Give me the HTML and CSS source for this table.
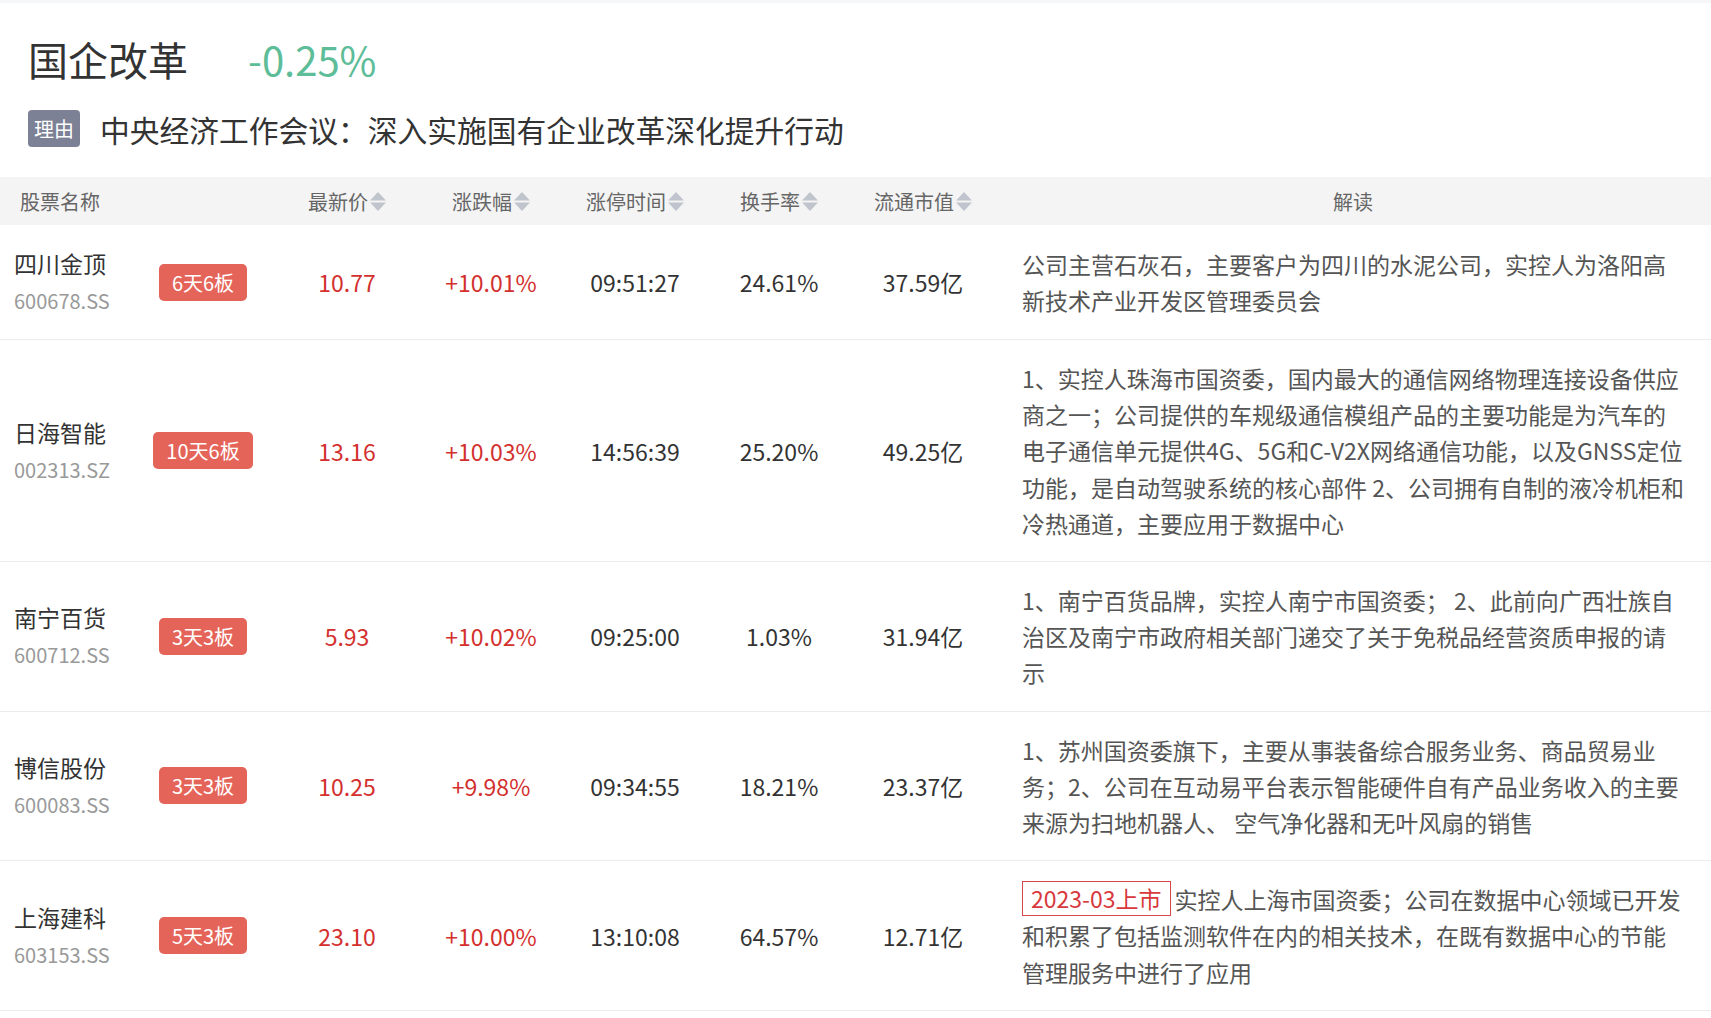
FILE: index.html
```html
<!DOCTYPE html>
<html lang="zh-CN">
<head>
<meta charset="utf-8">
<title>国企改革</title>
<link rel="stylesheet" href="styles.css">
</head>
<body>
<div class="top">
  <div class="title-row">
    <h1 class="title">国企改革</h1>
    <span class="change">-0.25%</span>
  </div>
  <div class="reason">
    <span class="reason-tag">理由</span>
    <span class="reason-text">中央经济工作会议：深入实施国有企业改革深化提升行动</span>
  </div>
</div>

<div class="table">
  <div class="thead">
    <div class="th th-name">股票名称</div>
    <div class="th"></div>
    <div class="th sort">最新价<svg class="arrows" viewBox="0 0 16 19" width="16" height="19"><polygon points="0,8.5 8,0 16,8.5"/><polygon points="0,10.5 16,10.5 8,19"/></svg></div>
    <div class="th sort">涨跌幅<svg class="arrows" viewBox="0 0 16 19" width="16" height="19"><polygon points="0,8.5 8,0 16,8.5"/><polygon points="0,10.5 16,10.5 8,19"/></svg></div>
    <div class="th sort">涨停时间<svg class="arrows" viewBox="0 0 16 19" width="16" height="19"><polygon points="0,8.5 8,0 16,8.5"/><polygon points="0,10.5 16,10.5 8,19"/></svg></div>
    <div class="th sort">换手率<svg class="arrows" viewBox="0 0 16 19" width="16" height="19"><polygon points="0,8.5 8,0 16,8.5"/><polygon points="0,10.5 16,10.5 8,19"/></svg></div>
    <div class="th sort">流通市值<svg class="arrows" viewBox="0 0 16 19" width="16" height="19"><polygon points="0,8.5 8,0 16,8.5"/><polygon points="0,10.5 16,10.5 8,19"/></svg></div>
    <div class="th th-desc">解读</div>
  </div>

  <div class="row">
    <div class="name-cell"><div class="name">四川金顶</div><div class="code">600678.SS</div></div>
    <div class="badge-cell"><span class="badge">6天6板</span></div>
    <div class="num up">10.77</div>
    <div class="num up">+10.01%</div>
    <div class="num">09:51:27</div>
    <div class="num">24.61%</div>
    <div class="num">37.59亿</div>
    <div class="desc">公司主营石灰石，主要客户为四川的水泥公司，实控人为洛阳高新技术产业开发区管理委员会</div>
  </div>

  <div class="row">
    <div class="name-cell"><div class="name">日海智能</div><div class="code">002313.SZ</div></div>
    <div class="badge-cell"><span class="badge">10天6板</span></div>
    <div class="num up">13.16</div>
    <div class="num up">+10.03%</div>
    <div class="num">14:56:39</div>
    <div class="num">25.20%</div>
    <div class="num">49.25亿</div>
    <div class="desc">1、实控人珠海市国资委，国内最大的通信网络物理连接设备供应商之一；公司提供的车规级通信模组产品的主要功能是为汽车的电子通信单元提供4G、5G和C-V2X网络通信功能，以及GNSS定位功能，是自动驾驶系统的核心部件 2、公司拥有自制的液冷机柜和冷热通道，主要应用于数据中心</div>
  </div>

  <div class="row">
    <div class="name-cell"><div class="name">南宁百货</div><div class="code">600712.SS</div></div>
    <div class="badge-cell"><span class="badge">3天3板</span></div>
    <div class="num up">5.93</div>
    <div class="num up">+10.02%</div>
    <div class="num">09:25:00</div>
    <div class="num">1.03%</div>
    <div class="num">31.94亿</div>
    <div class="desc">1、南宁百货品牌，实控人南宁市国资委； 2、此前向广西壮族自治区及南宁市政府相关部门递交了关于免税品经营资质申报的请示</div>
  </div>

  <div class="row">
    <div class="name-cell"><div class="name">博信股份</div><div class="code">600083.SS</div></div>
    <div class="badge-cell"><span class="badge">3天3板</span></div>
    <div class="num up">10.25</div>
    <div class="num up">+9.98%</div>
    <div class="num">09:34:55</div>
    <div class="num">18.21%</div>
    <div class="num">23.37亿</div>
    <div class="desc">1、苏州国资委旗下，主要从事装备综合服务业务、商品贸易业务；2、公司在互动易平台表示智能硬件自有产品业务收入的主要来源为扫地机器人、 空气净化器和无叶风扇的销售</div>
  </div>

  <div class="row">
    <div class="name-cell"><div class="name">上海建科</div><div class="code">603153.SS</div></div>
    <div class="badge-cell"><span class="badge">5天3板</span></div>
    <div class="num up">23.10</div>
    <div class="num up">+10.00%</div>
    <div class="num">13:10:08</div>
    <div class="num">64.57%</div>
    <div class="num">12.71亿</div>
    <div class="desc"><span class="ipo">2023-03上市</span>实控人上海市国资委；公司在数据中心领域已开发和积累了包括监测软件在内的相关技术，在既有数据中心的节能管理服务中进行了应用</div>
  </div>
</div>
</body>
</html>
```

FILE: styles.css
```css
* {
  box-sizing: border-box;
}

body {
  margin: 0;
  background: #ffffff;
  font-family: "Noto Sans CJK SC", "Noto Sans", sans-serif;
  color: #333333;
  border-top: 3px solid #f5f6f8;
}

.top {
  padding: 30px 0 0 28px;
}

.title-row {
  display: flex;
  align-items: center;
  height: 52px;
}

.title {
  margin: 0;
  font-size: 40px;
  font-weight: 400;
  line-height: 52px;
  color: #333333;
}

.change {
  margin-left: 60px;
  font-size: 40px;
  line-height: 52px;
  color: #5dbd98;
}

.reason {
  display: flex;
  align-items: center;
  margin-top: 25px;
  height: 37px;
}

.reason-tag {
  background: #7c8196;
  color: #ffffff;
  font-size: 20px;
  line-height: 37px;
  padding: 0 6px;
  border-radius: 4px;
}

.reason-text {
  margin-left: 20px;
  font-size: 29.75px;
  color: #333333;
}

.table {
  margin-top: 30px;
}

.thead,
.row {
  display: grid;
  grid-template-columns: 131px repeat(6, 144px) 1fr;
  align-items: center;
}

.thead {
  height: 48px;
  background: #f4f4f4;
  font-size: 20px;
  color: #666666;
}

.th-name {
  padding-left: 20px;
}

.sort {
  display: flex;
  justify-content: center;
  align-items: center;
  gap: 2px;
}

.arrows {
  fill: #c0c4cc;
  display: block;
}

.th-desc {
  text-align: center;
}

.row {
  padding: 20px 0;
  border-bottom: 1px solid #ececec;
}

.name-cell {
  padding-left: 14px;
}

.name {
  font-size: 23px;
  line-height: 37px;
  color: #333333;
}

.code {
  font-size: 20px;
  line-height: 37px;
  color: #999999;
}

.badge-cell {
  display: flex;
  justify-content: center;
}

.badge {
  background: #e5645a;
  color: #ffffff;
  font-size: 20px;
  line-height: 37px;
  padding: 0 13px;
  border-radius: 5px;
}

.num {
  text-align: center;
  font-size: 23px;
  line-height: 36px;
  color: #333333;
}

.num.up {
  color: #d3302e;
}

.desc {
  padding: 0 23px 0 27px;
  font-size: 23px;
  line-height: 36.2px;
  color: #555555;
}

.ipo {
  display: inline-block;
  vertical-align: top;
  border: 1px solid #d8474a;
  color: #d8393c;
  padding: 0 8px;
  line-height: 33px;
  margin-right: 4px;
}
```
